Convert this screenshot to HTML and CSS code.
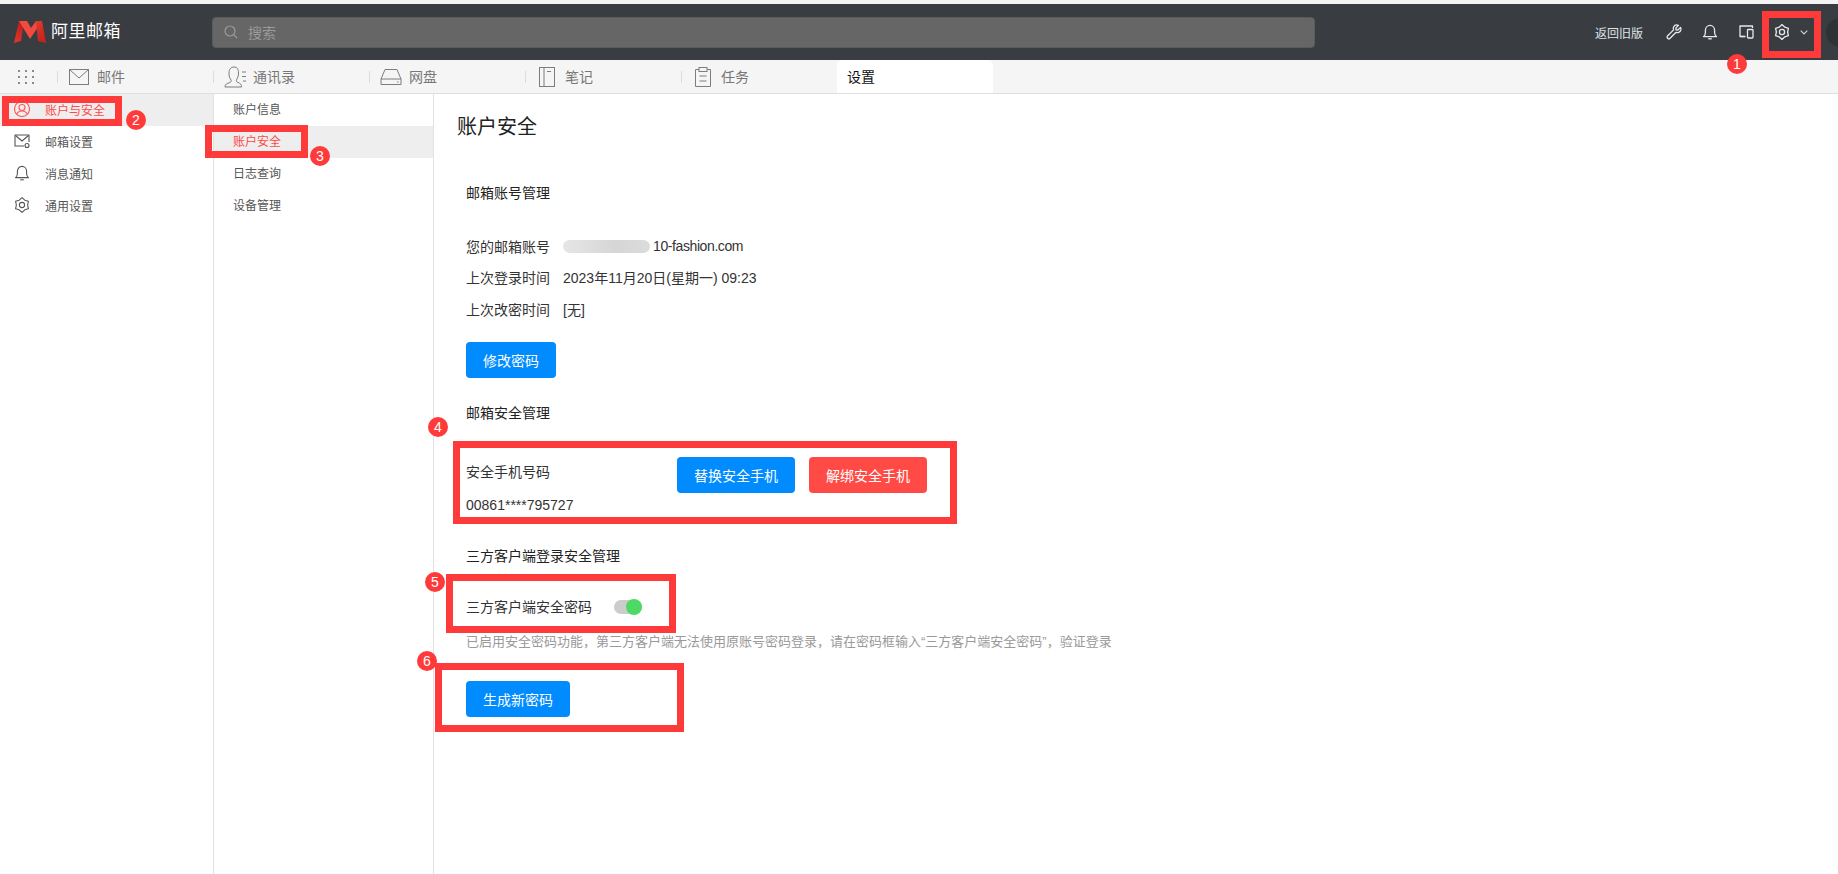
FILE: index.html
```html
<!DOCTYPE html>
<html lang="zh-CN">
<head>
<meta charset="utf-8">
<title>阿里邮箱 设置</title>
<link rel="stylesheet" href="styles.css">
</head>
<body>
<div class="page">
  <header class="header">
    <div class="logo">
      <svg class="logo-mark" viewBox="0 0 32 22">
        <defs>
          <linearGradient id="legLeft" x1="0" y1="1" x2="0.4" y2="0"><stop offset="0" stop-color="#e8362c"/><stop offset="1" stop-color="#b9211b"/></linearGradient>
          <linearGradient id="legRight" x1="0" y1="0" x2="0.3" y2="1"><stop offset="0" stop-color="#e23a30"/><stop offset="1" stop-color="#c4231d"/></linearGradient>
        </defs>
        <path d="M0 22 L5 0 L10 1 L7 20Z" fill="url(#legLeft)"/>
        <path d="M5 0 L13 0 L17 7 L22 0 L28 0 L16 18Z" fill="#f24a3e"/>
        <path d="M22 0 L28 0 L32 22 L24 20Z" fill="url(#legRight)"/>
      </svg>
      <span class="logo-text">阿里邮箱</span>
    </div>
    <div class="search">
      <svg class="search-icon" viewBox="0 0 14 14"><circle cx="6" cy="6" r="5"/><path d="M9.7 9.7 L13 13"/></svg>
      <span>搜索</span>
    </div>
    <div class="tools">
      <span class="old-link">返回旧版</span>
      <svg class="tool-icon wrench" viewBox="0 0 16 16"><path d="M14.6 3.4 L11.9 6 L10 5.9 L9.9 4 L12.5 1.4 C10.6 .6 8.4 1.3 7.6 3 C7.2 4 7.2 5 7.6 5.9 L1.7 11.8 C.9 12.6 .9 13.6 1.6 14.3 C2.3 15 3.4 15 4.1 14.3 L10 8.3 C11 8.8 12.1 8.7 13 8.2 C14.7 7.4 15.4 5.2 14.6 3.4Z"/></svg>
      <svg class="tool-icon bell" viewBox="0 0 16 16"><path d="M1.500 12.600 C3 11.600 3.400 10.400 3.400 8.600 V6.400 C3.400 3.600 5.400 1.400 8 1.400 C10.600 1.400 12.600 3.600 12.600 6.400 V8.600 C12.600 10.400 13 11.600 14.500 12.600Z"/><path d="M6.200 14.800 H9.800"/></svg>
      <svg class="tool-icon devices" viewBox="0 0 16 16"><path d="M7 12.500 H2 V2 H14.500 V4"/><path d="M2 12.500 H7.500"/><rect x="9.500" y="5.500" width="5.500" height="8.500" rx=".8"/></svg>
      <svg class="tool-icon gear" viewBox="0 0 16 16"><path d="M8 15.400 L10.800 12.850 L14.410 11.700 L13.600 8 L14.410 4.300 L10.800 3.150 L8 .6 L5.200 3.150 L1.590 4.300 L2.400 8 L1.590 11.700 L5.200 12.850Z"/><circle cx="8" cy="8" r="2.600"/></svg>
      <svg class="chevron" viewBox="0 0 8 5"><path d="M.7 .7 L4 4 L7.300 .7"/></svg>
    </div>
    <div class="avatar"></div>
  </header>

  <nav class="tabs">
    <div class="apps">
      <svg class="apps-icon" viewBox="0 0 16 14">
        <g><rect x="0" y="0" width="2" height="2"/><rect x="7" y="0" width="2" height="2"/><rect x="14" y="0" width="2" height="2"/><rect x="0" y="6" width="2" height="2"/><rect x="7" y="6" width="2" height="2"/><rect x="14" y="6" width="2" height="2"/><rect x="0" y="12" width="2" height="2"/><rect x="7" y="12" width="2" height="2"/><rect x="14" y="12" width="2" height="2"/></g>
      </svg>
    </div>
    <div class="tab">
      <i class="tab-sep"></i>
      <svg class="tab-icon" viewBox="0 0 22 22"><rect x="1.500" y="3.500" width="19" height="15"/><path d="M2 4 L11 12 L20 4"/></svg>
      <span>邮件</span>
    </div>
    <div class="tab">
      <i class="tab-sep"></i>
      <svg class="tab-icon" viewBox="0 0 22 22"><path d="M1 21 C1 18 3 17.500 6 16.500 C7 16 7.500 15 7 14 C5.500 12 5 10 5 7 C5 3 7 1 10 1 C13 1 14.500 3 14.500 7 C14.500 10 13.500 12 12.500 14 C12 15 12.500 16 14 16.500 C16.500 17.500 17.500 18.500 17.500 21Z"/><path d="M18 6 H22 M18 10.500 H22 M19 15 H22"/></svg>
      <span>通讯录</span>
    </div>
    <div class="tab">
      <i class="tab-sep"></i>
      <svg class="tab-icon" viewBox="0 0 22 22"><path d="M5 3.500 H17 L21 13 V18.500 H1 V13Z"/><path d="M1 13 H21"/><path d="M17 16 H18.500"/></svg>
      <span>网盘</span>
    </div>
    <div class="tab">
      <i class="tab-sep"></i>
      <svg class="tab-icon" viewBox="0 0 22 22"><rect x="3.500" y="1.500" width="15" height="19"/><path d="M8 2 V20 M11 5.500 H15"/></svg>
      <span>笔记</span>
    </div>
    <div class="tab">
      <i class="tab-sep"></i>
      <svg class="tab-icon" viewBox="0 0 22 22"><path d="M7 3.500 H3.500 V20.500 H18.500 V3.500 H15"/><rect x="7" y="1.500" width="8" height="4"/><path d="M7.500 10 H14.500 M7.500 15 H14.500"/></svg>
      <span>任务</span>
    </div>
    <div class="tab tab-active"><span>设置</span></div>
  </nav>

  <main class="main">
    <aside class="side-primary">
      <div class="side-row side-row-active">
        <svg class="side-icon" viewBox="0 0 16 16"><circle cx="8" cy="8" r="7.500"/><circle cx="8" cy="6.500" r="3"/><path d="M2.800 13.300 C3.500 11 5.500 10 8 10 C10.500 10 12.500 11 13.200 13.300"/></svg>
        <span>账户与安全</span>
      </div>
      <div class="side-row">
        <svg class="side-icon" viewBox="0 0 16 16"><path d="M10 13 H1 V2 H15 V9"/><path d="M1.500 2.500 L8 8 L14.500 2.500"/><circle cx="13" cy="12.500" r="2"/></svg>
        <span>邮箱设置</span>
      </div>
      <div class="side-row">
        <svg class="side-icon" viewBox="0 0 16 16"><path d="M1.500 12.600 C3 11.600 3.400 10.400 3.400 8.600 V6.400 C3.400 3.600 5.400 1.400 8 1.400 C10.600 1.400 12.600 3.600 12.600 6.400 V8.600 C12.600 10.400 13 11.600 14.500 12.600Z"/><path d="M6.200 14.800 H9.800"/></svg>
        <span>消息通知</span>
      </div>
      <div class="side-row">
        <svg class="side-icon" viewBox="0 0 16 16"><path d="M8 15.400 L10.800 12.850 L14.410 11.700 L13.600 8 L14.410 4.300 L10.800 3.150 L8 .6 L5.200 3.150 L1.590 4.300 L2.400 8 L1.590 11.700 L5.200 12.850Z"/><circle cx="8" cy="8" r="2.600"/></svg>
        <span>通用设置</span>
      </div>
    </aside>

    <aside class="side-secondary">
      <div class="sub-row">账户信息</div>
      <div class="sub-row sub-row-active">账户安全</div>
      <div class="sub-row">日志查询</div>
      <div class="sub-row">设备管理</div>
    </aside>

    <section class="content">
      <h1 class="title">账户安全</h1>
      <div class="body">
        <h2 class="heading heading-account">邮箱账号管理</h2>
        <div class="info-list">
          <div class="info-row info-row-first"><span class="info-label">您的邮箱账号</span><span class="info-value"><i class="email-mask"></i><span class="email-tail">10-fashion.com</span></span></div>
          <div class="info-row"><span class="info-label">上次登录时间</span><span class="info-value">2023年11月20日(星期一) 09:23</span></div>
          <div class="info-row"><span class="info-label">上次改密时间</span><span class="info-value">[无]</span></div>
        </div>
        <button class="btn btn-password">修改密码</button>
        <h2 class="heading heading-security">邮箱安全管理</h2>
        <div class="phone-row">
          <span class="phone-label">安全手机号码</span>
          <button class="btn btn-wide">替换安全手机</button>
          <button class="btn btn-wide btn-danger">解绑安全手机</button>
        </div>
        <div class="phone-number">00861****795727</div>
        <h2 class="heading heading-client">三方客户端登录安全管理</h2>
        <div class="client-row">
          <span>三方客户端安全密码</span>
          <span class="toggle"><i class="toggle-knob"></i></span>
        </div>
        <p class="hint">已启用安全密码功能，第三方客户端无法使用原账号密码登录，请在密码框输入“三方客户端安全密码”，验证登录</p>
        <button class="btn btn-generate">生成新密码</button>
      </div>
    </section>
  </main>

  <div class="mark mark-1"></div>
  <div class="mark mark-2"></div>
  <div class="mark mark-3"></div>
  <div class="mark mark-4"></div>
  <div class="mark mark-5"></div>
  <div class="mark mark-6"></div>
  <span class="badge badge-1">1</span>
  <span class="badge badge-2">2</span>
  <span class="badge badge-3">3</span>
  <span class="badge badge-4">4</span>
  <span class="badge badge-5">5</span>
  <span class="badge badge-6">6</span>
</div>
</body>
</html>
```
FILE: styles.css
```css
* { box-sizing: border-box; }
html, body { margin: 0; height: 100%; overflow: hidden; background: #fff; }
body { font-family: "Liberation Sans", "Noto Sans CJK SC", sans-serif; font-size: 14px; color: #333; }
svg { display: block; fill: none; }

.page { position: relative; display: flex; flex-direction: column; height: 874px; padding-top: 4px; background: #fff; }
.page::before { content: ""; position: absolute; top: 0; left: 0; right: 0; height: 4px; background: #f3f3f3; }

.header { display: flex; align-items: center; height: 56px; background: #393d42; overflow: hidden; flex: none; }
.logo { display: flex; align-items: center; width: 212px; padding-left: 14px; flex: none; }
.logo-mark { width: 32px; height: 22px; flex: none; }
.logo-text { margin-left: 5px; font-size: 17px; line-height: 22px; font-weight: 400; letter-spacing: .5px; color: #fff; }
.search { display: flex; align-items: center; width: 1103px; height: 31px; padding-left: 11px; background: #666; border: 1px solid #5a5a5a; border-radius: 4px; color: #9a9a9a; flex: none; }
.search-icon { width: 14px; height: 14px; margin-right: 10px; stroke: #9a9a9a; stroke-width: 1.2; }
.tools { display: flex; align-items: center; margin-left: 280px; color: #dfe3e6; flex: none; }
.old-link { width: 49px; margin-right: 22px; font-size: 12px; white-space: nowrap; }
.tool-icon { width: 16px; height: 16px; margin-right: 20px; stroke: #e6e9ec; stroke-width: 1.3; stroke-linejoin: round; flex: none; }
.chevron { width: 8px; height: 5px; margin-left: -10px; stroke: #cfd3d6; stroke-width: 1.1; flex: none; }
.avatar { width: 29px; height: 29px; margin-left: 18px; border-radius: 50%; background: #2e3236; flex: none; }

.tabs { display: flex; align-items: stretch; height: 34px; background: #f5f5f5; border-bottom: 1px solid #dfdfdf; color: #777; flex: none; }
.apps { display: flex; align-items: center; width: 57px; padding-left: 18px; flex: none; }
.apps-icon { width: 16px; height: 14px; fill: #8a8a8a; }
.tab { display: flex; align-items: center; width: 156px; flex: none; }
.tab span { padding-bottom: 2px; }
.tab-sep { width: 1px; height: 12px; margin-right: 10px; background: #dcdcdc; flex: none; }
.tab-icon { width: 22px; height: 22px; margin-right: 7px; stroke: #7d7d7d; stroke-width: 1; flex: none; }
.tab-active { padding-left: 10px; height: 33px; background: #fff; border-radius: 6px 6px 0 0; color: #111; }

.main { display: flex; flex: 1; min-height: 0; }
.side-primary { width: 214px; border-right: 1px solid #e2e2e2; font-size: 12px; color: #555; flex: none; }
.side-row { display: flex; align-items: center; height: 32px; padding: 0 0 2px 14px; }
.side-row-active { background: #eee; color: #ff4848; }
.side-icon { width: 16px; height: 16px; margin-right: 15px; stroke: #555; stroke-width: 1.1; stroke-linejoin: round; flex: none; }
.side-row-active .side-icon { stroke: #ff5a5a; }
.side-secondary { width: 220px; border-right: 1px solid #e2e2e2; font-size: 12px; color: #555; flex: none; }
.sub-row { height: 32px; padding-left: 19px; line-height: 32px; }
.sub-row-active { background: #eee; color: #ff4848; }

.content { flex: 1; min-width: 0; padding-left: 23px; }
.title { margin: 19px 0 0; font-size: 20px; line-height: 28px; font-weight: 400; color: #222; }
.body { padding-left: 9px; }
.heading { margin: 0; font-size: 14px; line-height: 20px; font-weight: 400; color: #222; }
.heading-account { margin-top: 42px; }
.heading-security { margin-top: 25px; }
.heading-client { margin-top: 31px; }
.info-list { margin-top: 26px; }
.info-row { display: flex; align-items: center; height: 32px; }
.info-row-first { padding-top: 2px; }
.info-label { width: 97px; flex: none; }
.info-value { display: flex; align-items: center; }
.email-mask { width: 87px; height: 13px; margin-right: 3px; border-radius: 7px; background: linear-gradient(90deg, #e6e6e6, #d6d6d6 60%, #dcdcdc); filter: blur(.6px); flex: none; }
.email-tail { letter-spacing: -.4px; }

.btn { display: block; height: 36px; padding: 0; border: 0; border-radius: 4px; background: #008cff; color: #fff; font: inherit; text-align: center; }
.btn-password { width: 90px; margin-top: 17px; }
.btn-wide { width: 118px; }
.btn-danger { margin-left: 14px; background: #ff4a46; }
.btn-generate { width: 104px; margin-top: 29px; }

.phone-row { display: flex; align-items: center; margin-top: 34px; }
.phone-label { width: 211px; padding-bottom: 8px; flex: none; }
.phone-number { margin-top: 2px; line-height: 20px; }
.client-row { display: flex; align-items: center; margin-top: 31px; line-height: 20px; }
.toggle { position: relative; width: 28px; height: 14px; margin-left: 22px; border-radius: 7px; background: #ccc; }
.toggle-knob { position: absolute; top: -1px; right: 0; width: 16px; height: 16px; border-radius: 50%; background: #4cd964; }
.hint { margin: 15px 0 0; font-size: 13px; line-height: 20px; color: #999; white-space: nowrap; }

.mark { position: absolute; border: 7px solid #ff3a3a; }
.mark-1 { left: 1762px; top: 11px; width: 59px; height: 47px; }
.mark-2 { left: 2px; top: 96px; width: 120px; height: 30px; }
.mark-3 { left: 205px; top: 125px; width: 103px; height: 33px; }
.mark-4 { left: 453px; top: 441px; width: 504px; height: 83px; }
.mark-5 { left: 446px; top: 574px; width: 230px; height: 59px; }
.mark-6 { left: 435px; top: 663px; width: 249px; height: 69px; }

.badge { position: absolute; width: 20px; height: 20px; border-radius: 50%; background: #ff3a3a; color: #fff; font-size: 14px; line-height: 20px; text-align: center; }
.badge-1 { left: 1727px; top: 54px; }
.badge-2 { left: 126px; top: 110px; }
.badge-3 { left: 310px; top: 146px; }
.badge-4 { left: 428px; top: 417px; }
.badge-5 { left: 425px; top: 572px; }
.badge-6 { left: 417px; top: 651px; }
```
